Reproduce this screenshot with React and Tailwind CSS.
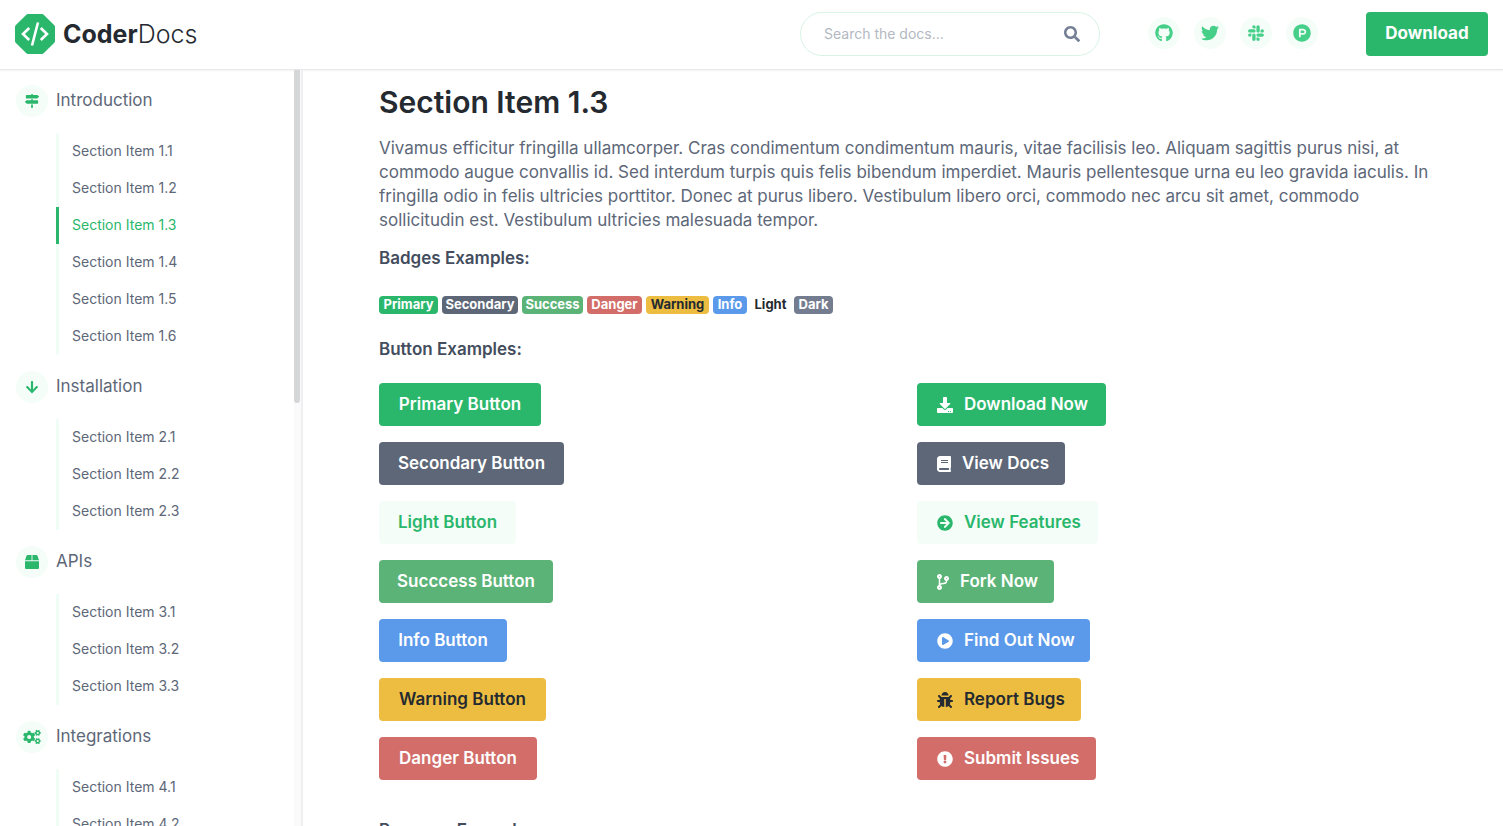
import {
  FaArrowCircleRight,
  FaArrowDown,
  FaBook,
  FaBox,
  FaBug,
  FaCodeBranch,
  FaCogs,
  FaDownload,
  FaExclamationCircle,
  FaGithub,
  FaMapSigns,
  FaPlayCircle,
  FaProductHunt,
  FaSearch,
  FaSlack,
  FaTwitter,
} from 'react-icons/fa'

const sections = [
  {
    title: 'Introduction',
    icon: FaMapSigns,
    items: ['1.1', '1.2', '1.3', '1.4', '1.5', '1.6'],
  },
  { title: 'Installation', icon: FaArrowDown, items: ['2.1', '2.2', '2.3'] },
  { title: 'APIs', icon: FaBox, items: ['3.1', '3.2', '3.3'] },
  { title: 'Integrations', icon: FaCogs, items: ['4.1', '4.2', '4.3'] },
]

const socials = [
  { name: 'GitHub', icon: FaGithub },
  { name: 'Twitter', icon: FaTwitter },
  { name: 'Slack', icon: FaSlack },
  { name: 'Product Hunt', icon: FaProductHunt },
]

const badges = [
  { label: 'Primary', style: 'w-[59px] bg-[#2ab76c] text-white' },
  { label: 'Secondary', style: 'w-[76px] bg-[#5d6778] text-white' },
  { label: 'Success', style: 'w-[61px] bg-[#5cb377] text-white' },
  { label: 'Danger', style: 'w-[55px] bg-[#d26d69] text-white' },
  { label: 'Warning', style: 'w-[63px] bg-[#ecbd41] text-[#252930]' },
  { label: 'Info', style: 'w-[34px] bg-[#5b99ea] text-white' },
  { label: 'Light', style: 'w-[39px] text-[#252930]' },
  { label: 'Dark', style: 'w-[39px] bg-[#747d90] text-white' },
]

const buttons = [
  { label: 'Primary Button', style: 'w-[162px] bg-[#2ab76c] text-white' },
  { label: 'Secondary Button', style: 'w-[185px] bg-[#5d6778] text-white' },
  { label: 'Light Button', style: 'w-[137px] bg-[#f4fdf8] text-[#2ab76c]' },
  { label: 'Succcess Button', style: 'w-[174px] bg-[#5cb377] text-white' },
  { label: 'Info Button', style: 'w-[128px] bg-[#5b99ea] text-white' },
  { label: 'Warning Button', style: 'w-[167px] bg-[#ecbd41] text-[#252930]' },
  { label: 'Danger Button', style: 'w-[158px] bg-[#d26d69] text-white' },
]

const iconButtons = [
  { label: 'Download Now', icon: FaDownload, iconWidth: 'w-4', style: 'w-[189px] bg-[#2ab76c] text-white' },
  { label: 'View Docs', icon: FaBook, iconWidth: 'w-3.5', style: 'w-[148px] bg-[#5d6778] text-white' },
  { label: 'View Features', icon: FaArrowCircleRight, iconWidth: 'w-4', style: 'w-[181px] bg-[#f4fdf8] text-[#2ab76c]' },
  { label: 'Fork Now', icon: FaCodeBranch, iconWidth: 'w-3', style: 'w-[137px] bg-[#5cb377] text-white' },
  { label: 'Find Out Now', icon: FaPlayCircle, iconWidth: 'w-4', style: 'w-[173px] bg-[#5b99ea] text-white' },
  { label: 'Report Bugs', icon: FaBug, iconWidth: 'w-4', style: 'w-[164px] bg-[#ecbd41] text-[#252930]' },
  { label: 'Submit Issues', icon: FaExclamationCircle, iconWidth: 'w-4', style: 'w-[179px] bg-[#d26d69] text-white' },
]

function Logo() {
  return (
    <a href="#" className="flex items-center gap-2 text-[#252930]">
      <svg viewBox="0 0 40 40" className="h-10 w-10" aria-hidden="true">
        <path
          d="M13 0h14q1 0 1.7.7l10.600 10.600q.7.7.7 1.7v14q0 1-.7 1.7L28.700 39.300q-.7.7-1.700.7H13q-1 0-1.700-.7L.7 28.700Q0 28 0 27V13q0-1 .7-1.700L11.300.7Q12 0 13 0z"
          fill="#2ab76c"
        />
        <path
          d="M14.200 14L8 20l6.200 6M25.800 14L32 20l-6.200 6M23 8.500L17 31.500"
          fill="none"
          stroke="#fff"
          strokeWidth="2.600"
        />
      </svg>
      <span className="text-[25px] leading-8">
        <span className="font-bold">Coder</span>
        <span className="font-light">Docs</span>
      </span>
    </a>
  )
}

function Header() {
  return (
    <header className="flex h-[70px] shrink-0 items-center border-b border-[#e8e8ea] px-[15px] pb-px shadow-[0_1px_2px_rgba(0,0,0,0.05)]">
      <Logo />
      <form className="mr-12 ml-auto flex h-11 w-[300px] items-center rounded-full border border-[#d9f3e5] pr-[19px] pl-[23px]">
        <input
          type="text"
          aria-label="Search the docs"
          placeholder="Search the docs..."
          className="min-w-0 flex-1 text-sm outline-none placeholder:text-[#b3b8c2]"
        />
        <button type="button" aria-label="Search" className="text-[#747f94]">
          <FaSearch className="h-4 w-4" />
        </button>
      </form>
      <ul className="mr-12 flex gap-[14px] pb-0.5">
        {socials.map(({ name, icon: Icon }) => (
          <li key={name}>
            <a
              href="#"
              aria-label={name}
              className="flex h-8 w-8 items-center justify-center rounded-full bg-[#f4fdf8] text-[#45cf88]"
            >
              <Icon className="h-[18px] w-[18px]" />
            </a>
          </li>
        ))}
      </ul>
      <a
        href="#"
        className="flex h-11 w-[122px] items-center justify-center rounded bg-[#2ab76c] text-[17px] font-bold text-white"
      >
        Download
      </a>
    </header>
  )
}

function Sidebar() {
  return (
    <aside className="flex w-[303px] shrink-0 overflow-hidden border-r-2 border-[#efeff1]">
      <nav className="flex-1 px-4 pt-[15px]">
        {sections.map(({ title, icon: Icon, items }) => (
          <div key={title} className="mb-4">
            <a href="#" className="flex items-center gap-2 text-[17px] text-[#5d6778]">
              <span className="flex h-8 w-8 items-center justify-center rounded-full bg-[#f4fdf8] text-[#2ab76c]">
                <Icon className="h-[14px] w-[18px]" />
              </span>
              {title}
            </a>
            <ul className="mt-4 ml-10">
              {items.map((item) => (
                <li key={item}>
                  <a
                    href="#"
                    className={
                      item === '1.3'
                        ? 'flex h-[37px] items-center border-l-3 border-[#2ab76c] pb-0.5 pl-[13px] text-sm text-[#2ab76c]'
                        : 'flex h-[37px] items-center border-l-3 border-[#f0fcf6] pb-0.5 pl-[13px] text-sm text-[#5d6778]'
                    }
                  >
                    Section Item {item}
                  </a>
                </li>
              ))}
            </ul>
          </div>
        ))}
      </nav>
      {/* Scroll track */}
      <div className="w-[7px] bg-[#fafafa] pr-px">
        <div className="h-[333px] rounded-b-full bg-[#d5d6d8]" />
      </div>
    </aside>
  )
}

function Article() {
  return (
    <main className="flex-1 overflow-hidden px-19 pt-[14px] text-[#5d6778]">
      <h2 className="text-[30px] leading-9 font-semibold text-[#252930]">Section Item 1.3</h2>
      <p className="mt-4 text-[17px] leading-6 xl:whitespace-nowrap">
        Vivamus efficitur fringilla ullamcorper. Cras condimentum condimentum mauris, vitae facilisis leo. Aliquam
        sagittis purus nisi, at <br />
        commodo augue convallis id. Sed interdum turpis quis felis bibendum imperdiet. Mauris pellentesque urna eu leo
        gravida iaculis. In <br />
        fringilla odio in felis ultricies porttitor. Donec at purus libero. Vestibulum libero orci, commodo nec arcu
        sit amet, commodo <br />
        sollicitudin est. Vestibulum ultricies malesuada tempor.
      </p>

      <h5 className="mt-[14px] text-[17px] leading-6 font-semibold text-[#434d5e]">Badges Examples:</h5>
      <div className="mt-[26px] flex gap-1">
        {badges.map(({ label, style }) => (
          <span
            key={label}
            className={`flex h-[18px] items-center justify-center rounded text-[13px] font-bold ${style}`}
          >
            {label}
          </span>
        ))}
      </div>

      <h5 className="mt-[23px] text-[17px] leading-6 font-semibold text-[#434d5e]">Button Examples:</h5>
      <div className="mt-[22px] grid grid-cols-2 gap-x-7">
        <div className="flex flex-col items-start gap-4">
          {buttons.map(({ label, style }) => (
            <button
              key={label}
              type="button"
              className={`flex h-[43px] items-center justify-center rounded text-[17px] font-semibold whitespace-nowrap ${style}`}
            >
              {label}
            </button>
          ))}
        </div>
        <div className="flex flex-col items-start gap-4">
          {iconButtons.map(({ label, icon: Icon, iconWidth, style }) => (
            <button
              key={label}
              type="button"
              className={`flex h-[43px] items-center gap-[11px] rounded pl-5 text-[17px] font-semibold whitespace-nowrap ${style}`}
            >
              <Icon className={`h-4 ${iconWidth}`} />
              {label}
            </button>
          ))}
        </div>
      </div>

      <h5 className="mt-[38px] text-[17px] leading-6 font-semibold text-[#434d5e]">Progress Examples:</h5>
    </main>
  )
}

export default function App() {
  return (
    <div className="flex h-screen flex-col overflow-hidden bg-white font-['Inter',sans-serif]">
      <Header />
      <div className="flex min-h-0 flex-1">
        <Sidebar />
        <Article />
      </div>
    </div>
  )
}
